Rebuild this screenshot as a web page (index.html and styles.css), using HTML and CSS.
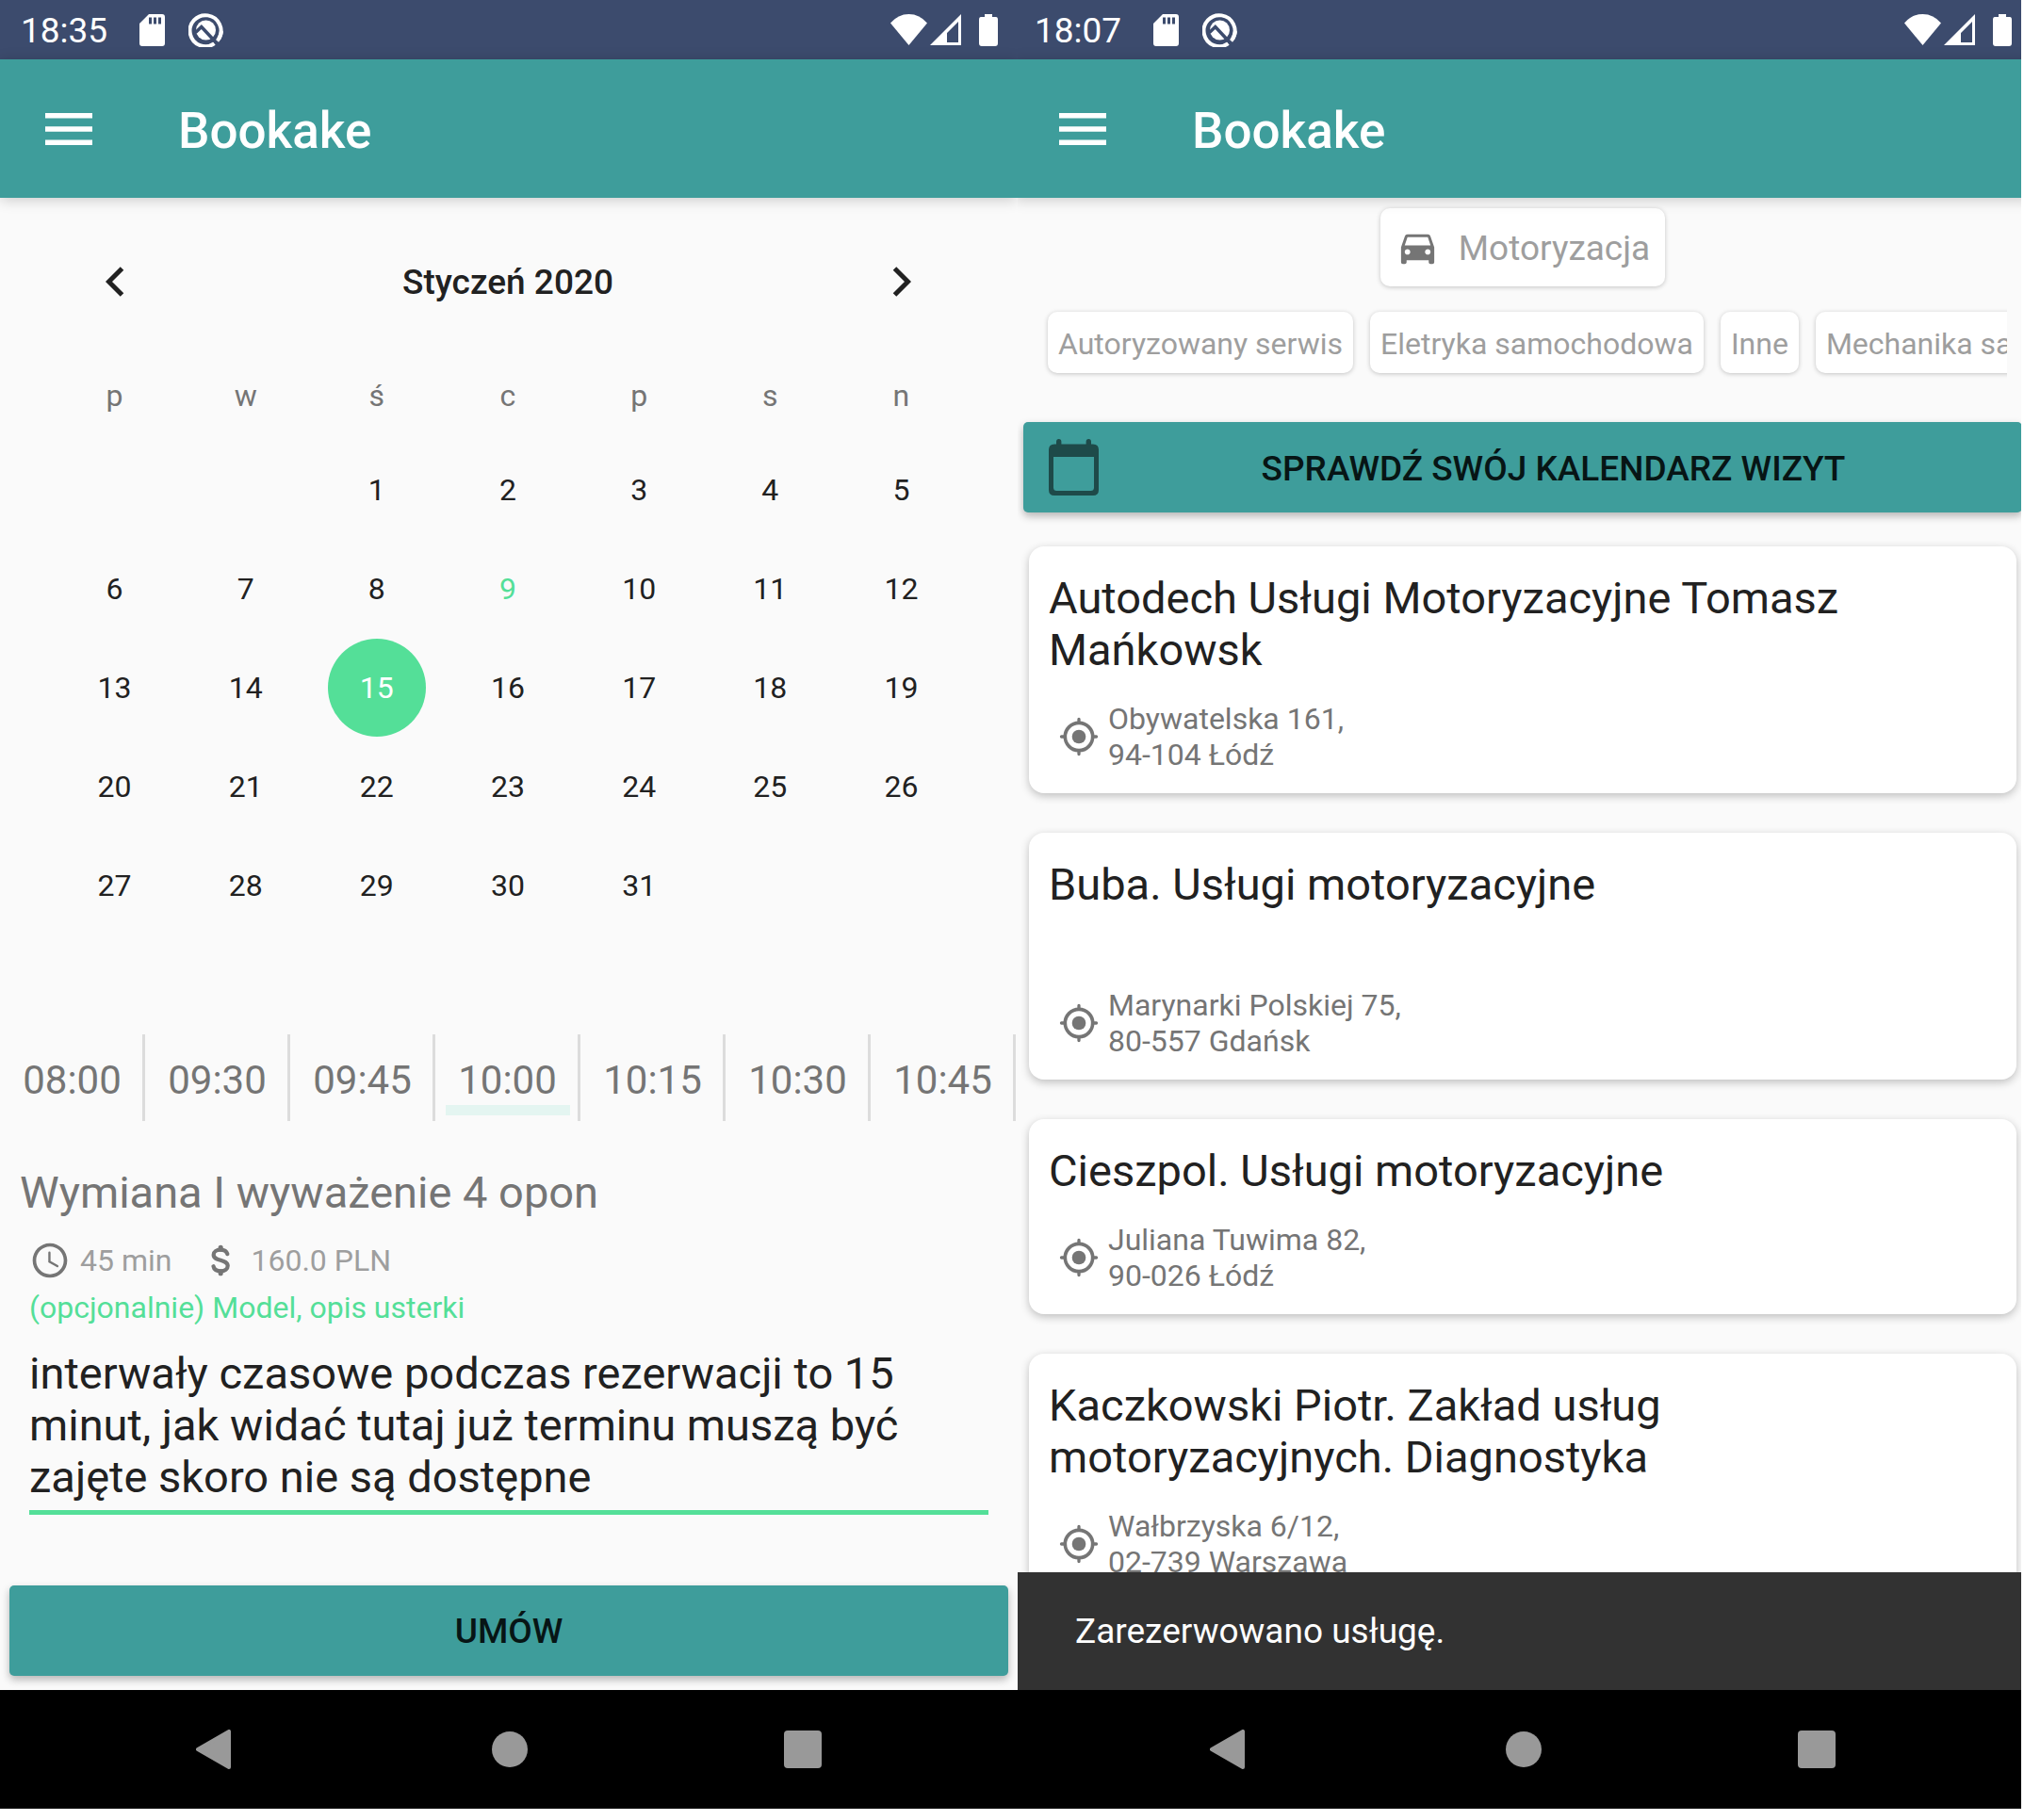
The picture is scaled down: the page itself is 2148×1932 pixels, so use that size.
FILE: index.html
```html
<!DOCTYPE html>
<html lang="pl">
<head>
<meta charset="utf-8">
<meta name="viewport" content="width=device-width, initial-scale=1">
<title>Bookake</title>
<link rel="stylesheet" href="styles.css">
</head>
<body>
<svg class="sprite" aria-hidden="true">
  <symbol id="i-sd" viewBox="0 0 27 34"><path fill="currentColor" fill-rule="evenodd" d="M10 0H24Q27 0 27 3V31Q27 34 24 34H3Q0 34 0 31V10ZM10 3.500V10.500H13V3.500ZM15 3.500V10.500H18V3.500ZM20 3.500V10.500H23V3.500Z"/></symbol>
  <symbol id="i-q" viewBox="0 0 37 37"><path fill="none" stroke="currentColor" stroke-width="4" d="M27.500 33.200A16.500 16.500 0 1 1 32.300 28"/><path fill="none" stroke="currentColor" stroke-width="4" d="M35 20Q34.500 26 30.500 30.500"/><circle cx="18.500" cy="19" r="10.500" fill="currentColor"/><path fill="none" stroke="#3c4b6d" stroke-width="3.500" d="M7.500 21.500L13.800 15.500L31 34"/></symbol>
  <symbol id="i-wifi" viewBox="0 0 39 33"><path fill="currentColor" d="M0 9.500Q8 0 19.500 0T39 9.500L19.500 33Z"/></symbol>
  <symbol id="i-signal" viewBox="0 0 33 33"><path fill="currentColor" fill-rule="evenodd" d="M33 0V33H0ZM30 8L18 20V30H30Z"/></symbol>
  <symbol id="i-battery" viewBox="0 0 20 34"><path fill="currentColor" d="M6 0H14V3H18Q20 3 20 6V31Q20 34 17 34H3Q0 34 0 31V6Q0 3 2 3H6Z"/></symbol>
  <symbol id="i-menu" viewBox="0 0 50 34"><path fill="currentColor" d="M0 0H50V5.500H0ZM0 14.200H50V19.800H0ZM0 28.500H50V34H0Z"/></symbol>
  <symbol id="i-prev" viewBox="0 0 20 32"><path fill="none" stroke="currentColor" stroke-width="5" d="M17.500 2L3.500 16L17.500 30"/></symbol>
  <symbol id="i-next" viewBox="0 0 20 32"><path fill="none" stroke="currentColor" stroke-width="5" d="M2.500 2L16.500 16L2.500 30"/></symbol>
  <symbol id="i-clock" viewBox="0 0 24 24"><path fill="currentColor" d="M11.990 2C6.470 2 2 6.480 2 12s4.470 10 9.990 10C17.520 22 22 17.520 22 12S17.520 2 11.990 2zM12 20c-4.420 0-8-3.580-8-8s3.580-8 8-8 8 3.580 8 8-3.580 8-8 8z"/><path fill="none" stroke="currentColor" stroke-width="1.300" stroke-linecap="round" d="M11.700 7.500V12.700L16.300 15.300"/></symbol>
  <symbol id="i-money" viewBox="0 0 24 24"><path fill="none" stroke="currentColor" stroke-width="2.300" stroke-linecap="round" d="M16 8.300C15.500 6.600 14 5.800 12 5.800C9.700 5.800 8 7 8 8.700C8 12.800 16.200 10.900 16.200 15.200C16.200 17 14.500 18.200 12.200 18.200C9.800 18.200 8.200 17.100 7.900 15.400"/><path fill="none" stroke="currentColor" stroke-width="2.800" stroke-linecap="round" d="M12.100 4.500V5.500M12.100 18.500V19.500"/></symbol>
  <symbol id="i-car" viewBox="0 0 24 24"><path fill="currentColor" d="M18.920 6.010C18.720 5.420 18.160 5 17.500 5h-11c-.66 0-1.210.42-1.420 1.010L3 12v8c0 .55.45 1 1 1h1c.55 0 1-.45 1-1v-1h12v1c0 .55.45 1 1 1h1c.55 0 1-.45 1-1v-8l-2.080-5.990zM6.500 16c-.83 0-1.500-.67-1.500-1.500S5.670 13 6.500 13s1.500.67 1.500 1.500S7.330 16 6.500 16zm11 0c-.83 0-1.500-.67-1.500-1.500s.67-1.500 1.500-1.500 1.500.67 1.500 1.500-.67 1.500-1.500 1.500zM5 11l1.500-4.500h11L19 11H5z"/></symbol>
  <symbol id="i-calendar" viewBox="0 0 53 60"><path fill="currentColor" fill-rule="evenodd" d="M8 5.500V3Q8 0 10.700 0T13.400 3V5.500H39.600V3Q39.600 0 42.300 0T45 3V5.500H47Q53 5.500 53 11.500V54Q53 60 47 60H6Q0 60 0 54V11.500Q0 5.500 6 5.500ZM5 19V51.500Q5 55 8.500 55H44.500Q48 55 48 51.500V19Z"/></symbol>
  <symbol id="i-place" viewBox="0 0 24 24"><circle cx="12" cy="12" r="8" fill="none" stroke="currentColor" stroke-width="2"/><circle cx="12" cy="12" r="4" fill="currentColor"/><path fill="none" stroke="currentColor" stroke-width="1.800" stroke-linecap="round" d="M12 1.900V4M12 20V22.100M1.900 12H4M20 12H22.100"/></symbol>
  <symbol id="i-back" viewBox="0 0 42 42"><path fill="currentColor" stroke="currentColor" stroke-width="4" stroke-linejoin="round" d="M35 2V40L2 21Z"/></symbol>
  <symbol id="i-home" viewBox="0 0 38 38"><circle cx="19" cy="19" r="19" fill="currentColor"/></symbol>
  <symbol id="i-recent" viewBox="0 0 40 40"><rect width="40" height="40" rx="4" fill="currentColor"/></symbol>
</svg>

<div class="board">
  <section class="phone">
    <div class="screen">
      <div class="status">
        <span class="clock">18:35</span>
        <svg class="ic-sd"><use href="#i-sd"/></svg>
        <svg class="ic-q"><use href="#i-q"/></svg>
        <svg class="ic-wifi"><use href="#i-wifi"/></svg>
        <svg class="ic-signal"><use href="#i-signal"/></svg>
        <svg class="ic-battery"><use href="#i-battery"/></svg>
      </div>
      <header class="appbar">
        <button class="icon-btn" type="button" aria-label="Menu"><svg class="ic-menu"><use href="#i-menu"/></svg></button>
        <h1>Bookake</h1>
      </header>
      <main class="content">
        <div class="calendar">
          <div class="month">
            <button class="icon-btn step" type="button" aria-label="Poprzedni miesiąc"><svg class="ic-chev"><use href="#i-prev"/></svg></button>
            <h2>Styczeń 2020</h2>
            <button class="icon-btn step" type="button" aria-label="Następny miesiąc"><svg class="ic-chev"><use href="#i-next"/></svg></button>
          </div>
          <table class="days">
            <thead><tr><th>p</th><th>w</th><th>ś</th><th>c</th><th>p</th><th>s</th><th>n</th></tr></thead>
            <tbody>
              <tr><td></td><td></td><td><button>1</button></td><td><button>2</button></td><td><button>3</button></td><td><button>4</button></td><td><button>5</button></td></tr>
              <tr><td><button>6</button></td><td><button>7</button></td><td><button>8</button></td><td><button class="today">9</button></td><td><button>10</button></td><td><button>11</button></td><td><button>12</button></td></tr>
              <tr><td><button>13</button></td><td><button>14</button></td><td><button class="selected" aria-pressed="true">15</button></td><td><button>16</button></td><td><button>17</button></td><td><button>18</button></td><td><button>19</button></td></tr>
              <tr><td><button>20</button></td><td><button>21</button></td><td><button>22</button></td><td><button>23</button></td><td><button>24</button></td><td><button>25</button></td><td><button>26</button></td></tr>
              <tr><td><button>27</button></td><td><button>28</button></td><td><button>29</button></td><td><button>30</button></td><td><button>31</button></td><td></td><td></td></tr>
            </tbody>
          </table>
        </div>
        <div class="slots">
          <button type="button">08:00</button><button type="button">09:30</button><button type="button">09:45</button><button type="button" class="picked" aria-pressed="true">10:00</button><button type="button">10:15</button><button type="button">10:30</button><button type="button">10:45</button>
        </div>
        <h3 class="service">Wymiana I wyważenie 4 opon</h3>
        <div class="facts">
          <svg class="ic-row"><use href="#i-clock"/></svg><span class="time">45 min</span>
          <svg class="ic-row"><use href="#i-money"/></svg><span>160.0 PLN</span>
        </div>
        <div class="field">
          <label for="note">(opcjonalnie) Model, opis usterki</label>
          <textarea id="note" rows="3" spellcheck="false">interwały czasowe podczas rezerwacji to 15 minut, jak widać tutaj już terminu muszą być zajęte skoro nie są dostępne</textarea>
        </div>
        <button class="action" type="button">UMÓW</button>
      </main>
      <nav class="sysnav">
        <button class="icon-btn" type="button" aria-label="Wstecz"><svg class="ic-back"><use href="#i-back"/></svg></button>
        <button class="icon-btn" type="button" aria-label="Ekran główny"><svg class="ic-home"><use href="#i-home"/></svg></button>
        <button class="icon-btn" type="button" aria-label="Ostatnie"><svg class="ic-recent"><use href="#i-recent"/></svg></button>
      </nav>
    </div>
  </section>

  <section class="phone">
    <div class="screen bleed">
      <div class="status">
        <span class="clock">18:07</span>
        <svg class="ic-sd"><use href="#i-sd"/></svg>
        <svg class="ic-q"><use href="#i-q"/></svg>
        <svg class="ic-wifi"><use href="#i-wifi"/></svg>
        <svg class="ic-signal"><use href="#i-signal"/></svg>
        <svg class="ic-battery"><use href="#i-battery"/></svg>
      </div>
      <header class="appbar">
        <button class="icon-btn" type="button" aria-label="Menu"><svg class="ic-menu"><use href="#i-menu"/></svg></button>
        <h1>Bookake</h1>
      </header>
      <main class="content browse">
        <button class="chip category" type="button"><svg class="ic-car"><use href="#i-car"/></svg><span>Motoryzacja</span></button>
        <div class="chips">
          <button class="chip" type="button">Autoryzowany serwis</button>
          <button class="chip" type="button">Eletryka samochodowa</button>
          <button class="chip" type="button">Inne</button>
          <button class="chip" type="button">Mechanika samochodowa</button>
        </div>
        <button class="action visits" type="button"><svg class="ic-calendar"><use href="#i-calendar"/></svg><span>SPRAWDŹ SWÓJ KALENDARZ WIZYT</span></button>
        <div class="cards">
          <article class="card">
            <h2>Autodech Usługi Motoryzacyjne Tomasz Mańkowsk</h2>
            <div class="place"><svg class="ic-row"><use href="#i-place"/></svg><address>Obywatelska 161,<br>94-104 Łódź</address></div>
          </article>
          <article class="card">
            <h2 class="two-lines">Buba. Usługi motoryzacyjne</h2>
            <div class="place"><svg class="ic-row"><use href="#i-place"/></svg><address>Marynarki Polskiej 75,<br>80-557 Gdańsk</address></div>
          </article>
          <article class="card">
            <h2>Cieszpol. Usługi motoryzacyjne</h2>
            <div class="place"><svg class="ic-row"><use href="#i-place"/></svg><address>Juliana Tuwima 82,<br>90-026 Łódź</address></div>
          </article>
          <article class="card">
            <h2>Kaczkowski Piotr. Zakład usług motoryzacyjnych. Diagnostyka</h2>
            <div class="place"><svg class="ic-row"><use href="#i-place"/></svg><address>Wałbrzyska 6/12,<br>02-739 Warszawa</address></div>
          </article>
        </div>
        <div class="snackbar" role="status">Zarezerwowano usługę.</div>
      </main>
      <nav class="sysnav">
        <button class="icon-btn" type="button" aria-label="Wstecz"><svg class="ic-back"><use href="#i-back"/></svg></button>
        <button class="icon-btn" type="button" aria-label="Ekran główny"><svg class="ic-home"><use href="#i-home"/></svg></button>
        <button class="icon-btn" type="button" aria-label="Ostatnie"><svg class="ic-recent"><use href="#i-recent"/></svg></button>
      </nav>
    </div>
  </section>
</div>
</body>
</html>
```
FILE: styles.css
```css
:root {
  --teal: #3e9d9b;
  --navy: #3c4b6d;
  --green: #54df98;
  --ink: #212121;
  --grey: #757575;
  --light: #9e9e9e;
  --paper: #fafafa;
}

* { box-sizing: border-box; }

body {
  margin: 0;
  background: #fff;
  color: var(--ink);
  font-family: Roboto, "Noto Sans", sans-serif;
  font-size: 32px;
}

h1, h2, h3 { margin: 0; font-weight: 400; }
button { padding: 0; border: 0; background: none; color: inherit; font: inherit; }
svg { display: block; flex: none; }
.sprite { display: none; }
.icon-btn { display: flex; align-items: center; justify-content: center; }

.board {
  display: grid;
  grid-template-columns: 1080fr 1065fr;
  padding-right: 3px;
}
.phone { display: flex; min-width: 0; overflow: hidden; }
.screen { display: flex; flex: 1; flex-direction: column; min-width: 0; }
/* the second screen runs a little past both edges of its column */
.bleed { margin: 0 -11px 0 -4px; }

/* status bar */
.status {
  display: flex;
  align-items: center;
  height: 63px;
  padding: 0 21px 0 22px;
  background: var(--navy);
  color: #fff;
  font-size: 37px;
}
.clock { padding-top: 2px; }
.ic-sd { width: 27px; height: 34px; margin-left: 34px; }
.ic-q { width: 37px; height: 37px; margin-left: 25px; }
.ic-wifi { width: 39px; height: 33px; margin-left: auto; }
.ic-signal { width: 33px; height: 33px; margin-left: 3px; }
.ic-battery { width: 20px; height: 34px; margin-left: 19px; }

/* app bar */
.appbar {
  position: relative;
  z-index: 1;
  display: flex;
  align-items: center;
  gap: 91px;
  height: 147px;
  padding-left: 48px;
  background: var(--teal);
  box-shadow: 0 2px 14px rgba(0, 0, 0, .2);
  color: #fff;
}
.appbar h1 { padding-top: 4px; font-size: 53px; font-weight: 500; }
.ic-menu { width: 50px; height: 34px; }

.content {
  position: relative;
  display: flex;
  flex: 1;
  flex-direction: column;
  background: var(--paper);
}

/* calendar */
.calendar { padding: 0 54px 0 52px; }
.month { display: flex; align-items: center; height: 164px; padding-top: 14px; }
.month h2 { flex: 1; font-size: 37px; font-weight: 500; text-align: center; }
.step { width: 139px; height: 100px; }
.ic-chev { width: 20px; height: 32px; }
.days { width: 100%; border-collapse: collapse; table-layout: fixed; }
.days th { height: 93px; padding: 0 0 2px; color: var(--grey); font-weight: 400; }
.days td { height: 105px; padding: 0; text-align: center; }
.days button { width: 104px; height: 104px; border-radius: 50%; }
.days .today { color: var(--green); }
.days .selected { background: var(--green); color: #fff; }

/* hours */
.slots { display: flex; margin-top: 106px; overflow: hidden; }
.slots button {
  position: relative;
  flex: 0 0 154px;
  height: 92px;
  padding: 4px 0 0 2px;
  border-right: 3px solid #dcdcdc;
  color: var(--grey);
  font-size: 42px;
}
.slots .picked::after {
  content: "";
  position: absolute;
  right: 8px;
  bottom: 6px;
  left: 11px;
  height: 11px;
  background: #e4f5f1;
}

/* service */
.service { margin-top: 48px; padding-left: 21px; color: var(--grey); font-size: 47px; line-height: 56px; }
.facts { display: flex; align-items: center; height: 44px; margin-top: 22px; padding-left: 31px; color: var(--light); }
.facts svg { color: var(--grey); }
.facts span { padding-left: 10px; }
.facts .time { padding-right: 30px; }
.ic-row { width: 44px; height: 44px; }

.field { display: flex; flex-direction: column; margin: 8px 31px 0; }
.field label { color: var(--green); line-height: 40px; }
.field textarea {
  display: block;
  width: 100%;
  margin-top: 22px;
  padding: 0 0 8px;
  border: 0;
  border-bottom: 5px solid var(--green);
  outline: 0;
  background: none;
  color: var(--ink);
  font: inherit;
  font-size: 47px;
  line-height: 55px;
  resize: none;
  overflow: hidden;
}

.action {
  height: 96px;
  margin: 75px 10px 15px;
  border-radius: 5px;
  background: var(--teal);
  box-shadow: 0 4px 8px rgba(0, 0, 0, .28);
  color: #071515;
  font-size: 37px;
  font-weight: 500;
}

/* browse */
.chip {
  flex: none;
  height: 65px;
  padding: 2px 11px 0;
  border-radius: 10px;
  background: #fff;
  box-shadow: 0 1px 5px rgba(0, 0, 0, .22);
  color: var(--light);
  white-space: nowrap;
}
.category {
  display: flex;
  align-items: center;
  align-self: center;
  gap: 20px;
  height: 83px;
  margin-top: 11px;
  padding: 0 16px;
  font-size: 37px;
}
.category span { padding-top: 2px; }
.ic-car { width: 47px; height: 47px; color: var(--grey); }
.chips { display: flex; gap: 18px; margin: 17px 26px 0 26px; padding: 10px 0 10px 10px; overflow: hidden; }
.visits { display: flex; align-items: center; margin: 42px 10px 36px; padding: 0 27px; }
.visits span { flex: 1; padding: 2px 0 0 12px; text-align: center; }
.ic-calendar { width: 53px; height: 60px; color: #1e4a49; }

.cards { display: flex; flex-direction: column; gap: 42px; padding: 0 16px 42px; }
.card {
  padding: 27px 21px 22px;
  border-radius: 16px;
  background: #fff;
  box-shadow: 0 3px 10px rgba(0, 0, 0, .24);
}
.card h2 { font-size: 47px; line-height: 55px; }
.card .two-lines { min-height: 110px; }
.place { display: flex; align-items: center; gap: 9px; margin-top: 27px; padding-left: 10px; color: var(--grey); }
.place address { font-style: normal; line-height: 38px; }

.snackbar {
  position: absolute;
  right: 0;
  bottom: 0;
  left: 0;
  padding: 42px 65px;
  background: #323232;
  color: #fff;
  font-size: 37px;
  line-height: 41px;
}

/* system navigation */
.sysnav {
  display: flex;
  align-items: center;
  justify-content: center;
  gap: 272px;
  height: 126px;
  background: #000;
  color: #999;
}
.ic-back { width: 42px; height: 42px; }
.ic-home { width: 38px; height: 38px; }
.ic-recent { width: 40px; height: 40px; }
```
